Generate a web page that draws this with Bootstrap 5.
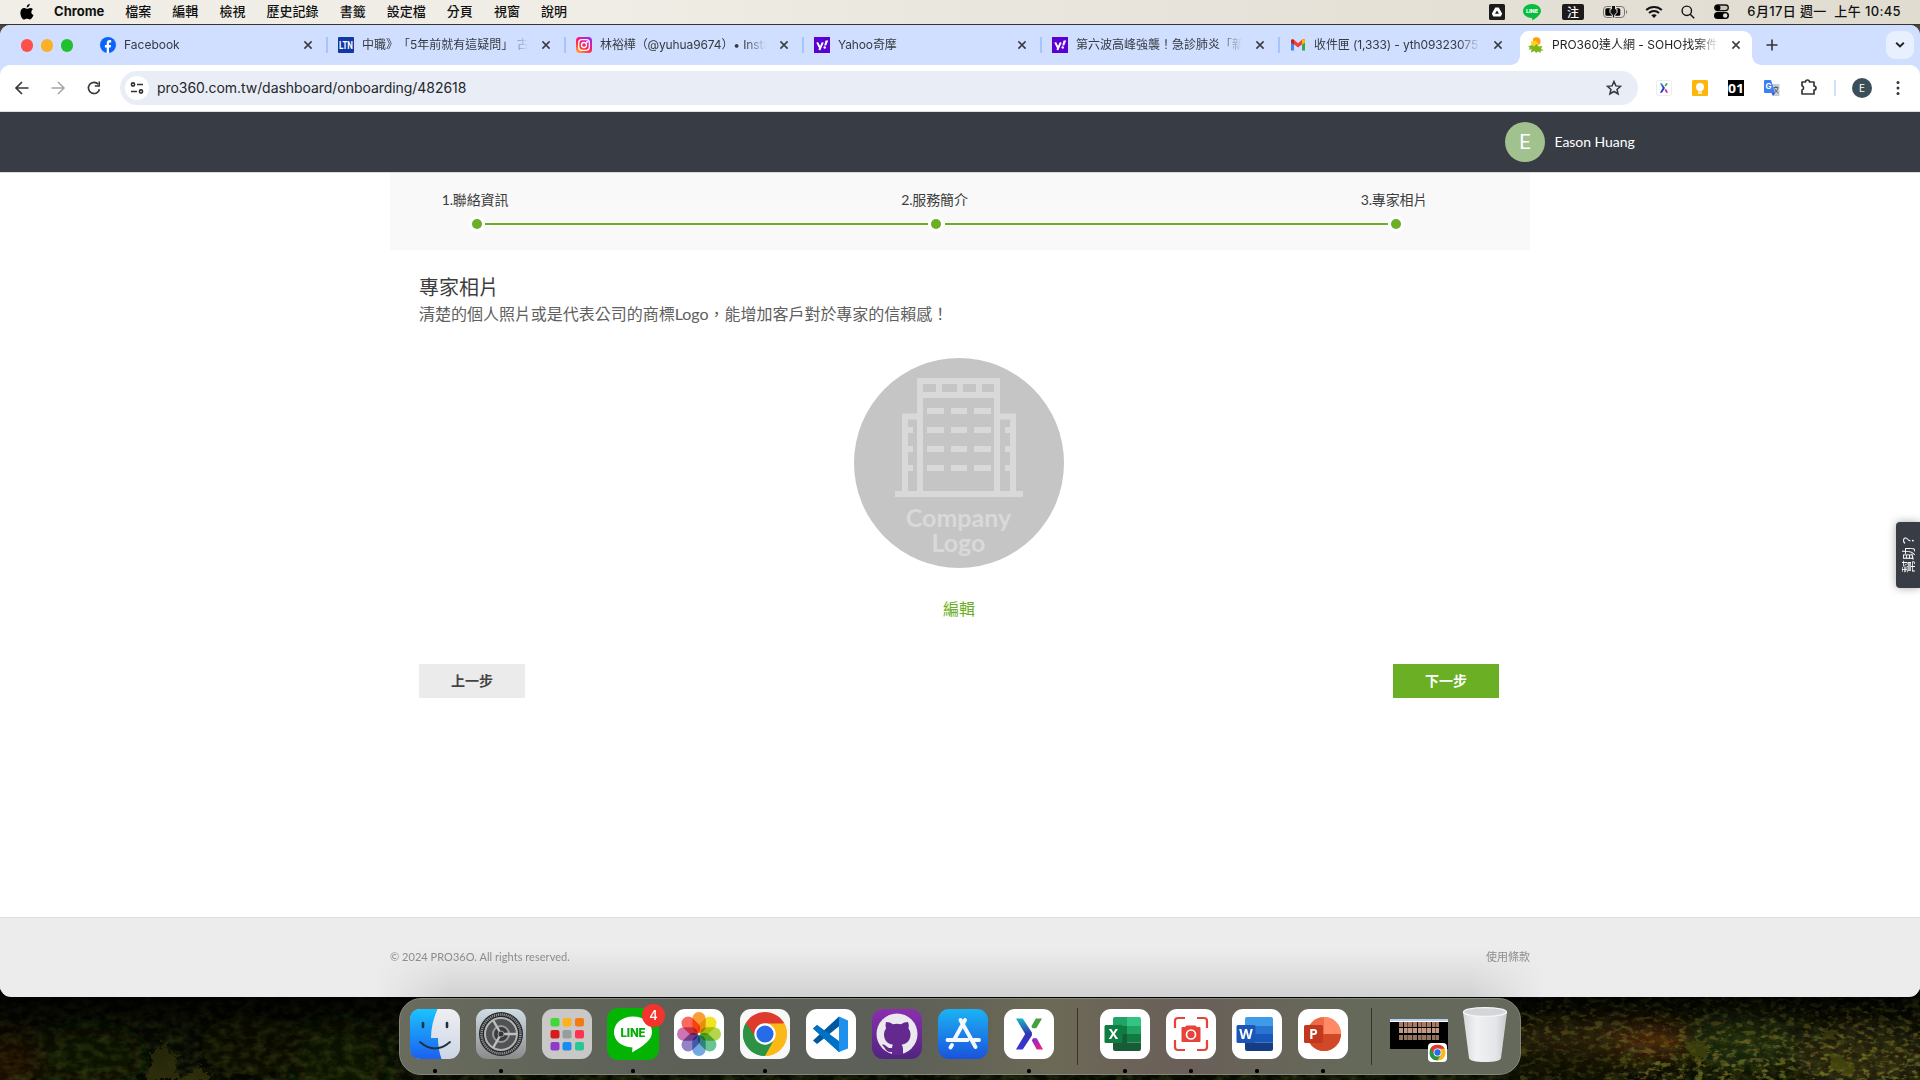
<!DOCTYPE html>
<html lang="zh-Hant">
<head>
<meta charset="utf-8">
<meta name="viewport" content="width=device-width, initial-scale=1">
<title>PRO360達人網 - SOHO找案件</title>
<link href="https://cdn.jsdelivr.net/npm/bootstrap@5.3.0/dist/css/bootstrap.min.css" rel="stylesheet">
<style>
body{width:1920px;height:1080px;overflow:hidden;background:#0a0c04;font-family:Inter,"Noto Sans CJK TC",sans-serif;position:relative;text-spacing-trim:space-all}
svg{display:block;flex:none}
.wallpaper{left:0;top:990px}
.menubar{height:24px;background:linear-gradient(90deg,#f0eee6 0,#efede5 30%,#e7e3da 62%,#e1dcd0 100%);font-size:13px;line-height:22px;color:#111;padding:0 19px 1px 20px;font-weight:500;white-space:nowrap}
.menu-names{gap:21.1px}
.menu-names span,.menu-names b,.clock{padding-bottom:2px}
.menu-names b{width:50px;margin:0 0 0 -1px;font-weight:700;letter-spacing:-.02px}
.clock{margin-left:18px;letter-spacing:.36px}
.window-frame{height:973px;border-top:1px solid #3a352c;background:linear-gradient(#4a463e 0 50%,#000 50%)}
.window-body{height:972px;border-radius:10px 10px 11px 11px;overflow:hidden;background:#fff}
.tabstrip{height:40px;background:#d0dfff;font-size:12px;color:#363a40;position:relative}
.lights{width:88px;padding-left:20.500px;gap:7.5px;padding-top:1px;height:40px}
.light{width:12.5px;height:12.5px;border-radius:50%}
.tab{width:238px;height:40px;padding:0 0 0 12px;position:relative}
.tab .tab-label{flex:none;margin-left:8px;width:168px;white-space:nowrap;overflow:hidden;line-height:20px;-webkit-mask-image:linear-gradient(90deg,#000 86%,transparent 99%);mask-image:linear-gradient(90deg,#000 86%,transparent 99%)}
.tab .closer{margin-left:11px}
.tab .tight{letter-spacing:-.12px}
.tab.split::after{content:"";position:absolute;left:238px;top:12px;width:2px;height:16px;background:#a6c6fb}
.tab.current{width:232px;margin-left:4px;height:34px;margin-top:6px;padding-left:8px;padding-bottom:6px;background:#fff;border-radius:9px 9px 0 0;color:#1d1f22}
.tab.current::before,.tab.current::after{content:"";position:absolute;bottom:0;width:9px;height:9px}
.tab.current::before{left:-9px;background:radial-gradient(circle at 0 0,transparent 8.5px,#fff 9px)}
.tab.current::after{right:-9px;background:radial-gradient(circle at 100% 0,transparent 8.5px,#fff 9px)}
.tab-search{width:28px;height:28px;border-radius:9px;background:#e8effe;margin-left:108px;margin-top:6px}
.toolbar-corners{background:#d0dfff}
.toolbar{height:47px;background:#fff;border-bottom:1px solid #dcdee1;padding:0 0 1px 14px;border-radius:10px 10px 0 0}
.omnibox{width:1518px;height:34px;border-radius:17px;background:#e9edf6;margin-left:18px;padding:0 16px 0 5px;font-size:14px;color:#24272b}
.site-info{width:24px;height:24px;border-radius:50%;background:#fff}
.url{margin-left:8px;letter-spacing:-.05px}
.ext{gap:20px;margin-left:18px}
.ext-line{width:2px;height:16px;background:#cfe0fc;margin-left:17px}
.profile{width:20px;height:20px;background:#3c4f58;margin-left:16px;font-size:10px;line-height:20px}
.page{font-family:Lato,"Noto Sans CJK TC",sans-serif;color:#3d3d3d;font-weight:400}
.site-nav{height:61px;background:#383c45;border-bottom:1px solid #d9dcdb;padding-left:1505px;font-size:14px;color:#fff}
.avatar{width:40px;height:40px;border-radius:50%;background:#a1c18f;font-size:20px;font-family:Roboto,sans-serif}
.user-label{margin-left:9.500px;padding-bottom:2px;letter-spacing:-.06px}
.content-col{width:1140px;margin:0 auto}
.steps{height:77px;background:#f9f9f9;font-size:14px;padding:17px 0 0 16px}
.step{width:138px;text-align:center;line-height:20px;letter-spacing:-.15px}
.step-gap{width:321.5px}
.track{height:10px;margin-top:9px;margin-left:66px}
.dot{width:10px;height:10px;border-radius:50%;background:#6aaf24;box-shadow:0 0 0 3px #fff}
.rail{width:443px;height:2px;margin:0 3px;background:#6aaf24;outline:1px solid #fff}
.inner{height:667px;padding:0 31px 0 29px}
.headline{font-size:20px;line-height:28px;margin:23px 0 0}
.intro{font-size:16px;line-height:24px;margin:1px 0 0;color:#606060;letter-spacing:-.02px}
.logo-box{padding-top:32px}
.edit{color:#6aaf24;font-size:16px;line-height:24px;text-decoration:none;margin-top:29px}
.step-actions{margin-top:43px}
.step-btn{width:106px;height:34px;border-radius:0;border:0;padding:0;font-size:14px;font-weight:700;line-height:34px;background:#ebebeb;color:#444}
.step-btn.next{background:#6aaf24;color:#fff}
.site-footer{height:80px;background:linear-gradient(90deg,transparent 375px,rgba(0,0,0,.11) 450px,rgba(0,0,0,.11) 1470px,transparent 1545px),#ececec;border-top:1px solid #dedede;font-size:11px;color:#8c8c8c;position:relative}
.site-footer::before{content:"";position:absolute;inset:0;background:linear-gradient(#ececec 38%,rgba(236,236,236,0))}
.site-footer .content-col{position:relative}
.rights{letter-spacing:.04px}
.help{right:0;top:522px;width:24px;height:66px;background:#383c45;border-radius:0 4px 4px 0;box-shadow:0 0 8px rgba(0,0,0,.35);color:#fff;font:13px/24px Lato,"Noto Sans CJK TC",sans-serif;writing-mode:vertical-rl;text-orientation:sideways;transform:rotate(180deg);padding-top:15px;white-space:nowrap}
.dock{left:399px;top:998px;width:1122px;height:77px;border-radius:22px;border:1px solid #84877c;background:linear-gradient(90deg,#686b5d 0,#5c6057 25%,#5d6058 45%,#6c6956 58%,#6a5f59 70%,#656959 84%,#65695c 100%);padding-left:10px}
.app{flex:none;width:50px;margin-right:16px;padding-top:10px;position:relative}
.app.on::after{content:"";position:absolute;left:23px;top:70px;width:4px;height:4px;border-radius:1.5px;background:#000}
.dock-line{flex:none;width:1px;height:57px;margin:9px 22px 0 7px;background:#33352a}
.dock-line.last{margin-right:18px}
.alert-count{left:34px;top:5px;width:23px;height:23px;border-radius:50%;background:#f4342c;color:#fff;font:500 13px/23px Inter,sans-serif;text-align:center}
</style>
<script src="https://cdn.jsdelivr.net/npm/bootstrap@5.3.0/dist/js/bootstrap.bundle.min.js"></script>
</head>
<body>
<svg width="0" height="0" class="position-absolute">
<defs>
<linearGradient id="gFinder" x2="0" y2="1"><stop stop-color="#1ac3fd"/><stop offset="1" stop-color="#1c60f0"/></linearGradient>
<linearGradient id="gFace" x2="0" y2="1"><stop stop-color="#efeff1"/><stop offset="1" stop-color="#ccd6e6"/></linearGradient>
<linearGradient id="gSet" x2="0" y2="1"><stop stop-color="#cfdde6"/><stop offset="1" stop-color="#8b8b8b"/></linearGradient>
<linearGradient id="gGit" x2="0" y2="1"><stop stop-color="#8a2fb0"/><stop offset="1" stop-color="#51247f"/></linearGradient>
<linearGradient id="gStore" x2="0" y2="1"><stop stop-color="#1bb3f4"/><stop offset="1" stop-color="#1a53dc"/></linearGradient>
<linearGradient id="gX" x2="0" y2="1"><stop stop-color="#18b5c4"/><stop offset=".5" stop-color="#3434b0"/><stop offset="1" stop-color="#3c33da"/></linearGradient>
<linearGradient id="gX2" x2="1" y2="1"><stop stop-color="#7a2be0"/><stop offset="1" stop-color="#ff1e70"/></linearGradient>
<linearGradient id="gTrash"><stop stop-color="#d5d6d9"/><stop offset=".3" stop-color="#f1f2f4"/><stop offset=".75" stop-color="#e4e5e8"/><stop offset="1" stop-color="#c6c8cc"/></linearGradient>
<linearGradient id="gIg" x1="0" y1="1" x2=".7" y2="0"><stop stop-color="#ffc53a"/><stop offset=".4" stop-color="#ff3a3a"/><stop offset=".7" stop-color="#f0158f"/><stop offset="1" stop-color="#9a2cf0"/></linearGradient>
<symbol id="x" viewBox="0 0 10 10"><path d="M1.400 1.400l7.200 7.200M8.600 1.400L1.400 8.600" stroke="#3b3e43" stroke-width="1.600" fill="none"/></symbol>
<symbol id="yahoo" viewBox="0 0 16 16"><path fill="#5a00d2" d="M0 0h16v16H0z"/><path fill="none" stroke="#fff" stroke-width="2" d="M3.200 5.400l2.500 5M8.800 5.400L5.300 13"/><path fill="#fff" d="M11.600 3.600h2.600l-2 5h-2z"/><circle cx="10.700" cy="10.500" r="1.200" fill="#fff"/></symbol>
<symbol id="chrome" viewBox="0 0 44 44"><path fill="#de3a2e" d="M22 22L2.950 11a22 22 0 0 1 38.100 0z"/><path fill="#fcb916" d="M22 22l19.050-11A22 22 0 0 1 22 44z"/><path fill="#2c9345" d="M22 22v22A22 22 0 0 1 2.950 11z"/><path fill="#de3a2e" d="M22 11.500h19.300L36 5H8l-5 6 10.500 16z"/><path fill="#fcb916" d="M22 11.500h19.300A22 22 0 0 1 22 44l9.500-16z"/><path fill="#2c9345" d="M31.300 27.200L22 44A22 22 0 0 1 2.950 11l9.800 16.200z"/><circle cx="22" cy="22" r="10.700" fill="#fff"/><circle cx="22" cy="22" r="8.600" fill="#266bea"/></symbol>
<symbol id="xmark" viewBox="0 0 30 34"><path fill="url(#gX)" d="M1 1h7l9.500 14.500v3L8 33H1l9.500-16z"/><path fill="#47a03c" d="M21.500 1H28l-6 10h-4l-1-2z"/><path fill="url(#gX2)" d="M18.500 21.500h4L29 33h-6.500l-5-9z"/></symbol>
</defs>
</svg>

<svg class="wallpaper position-absolute" width="1920" height="90" viewBox="0 0 1920 90">
<defs>
<filter id="leaf" x="0" y="0" width="100%" height="100%"><feTurbulence type="fractalNoise" baseFrequency=".09 .13" numOctaves="5" seed="8"/><feColorMatrix values="0 0 0 0 .13  0 0 0 0 .17  0 0 0 0 .02  1.500 0 0 0 -.55"/></filter>
<filter id="glint" x="0" y="0" width="100%" height="100%"><feTurbulence type="fractalNoise" baseFrequency=".12 .22" numOctaves="4" seed="21"/><feColorMatrix values=".9 0 0 0 -.02  0 .7 0 0 .02  0 0 0 0 .04  0 0 5 0 -2.500"/></filter>
<filter id="blurry" x="-30%" y="-50%" width="160%" height="200%"><feGaussianBlur stdDeviation="13"/></filter>
<filter id="rough" x="-20%" y="-20%" width="140%" height="140%"><feTurbulence type="fractalNoise" baseFrequency=".25" numOctaves="3" seed="3"/><feDisplacementMap in="SourceGraphic" scale="13" xChannelSelector="R" yChannelSelector="G"/></filter>
<linearGradient id="shade" x2="0" y2="1"><stop stop-color="#000" stop-opacity=".95"/><stop offset=".5" stop-color="#000" stop-opacity=".25"/><stop offset="1" stop-color="#000" stop-opacity="0"/></linearGradient>
</defs>
<path fill="#080b03" d="M0 0h1920v90H0z"/>
<g filter="url(#blurry)"><circle cx="10" cy="70" r="28" fill="#231005"/><ellipse cx="90" cy="65" rx="55" ry="28" fill="#0d1503"/><ellipse cx="250" cy="55" rx="50" ry="30" fill="#071004"/><ellipse cx="340" cy="70" rx="45" ry="40" fill="#0e1703"/><ellipse cx="1600" cy="50" rx="90" ry="18" fill="#4a310a"/><ellipse cx="1655" cy="48" rx="40" ry="14" fill="#6b300a"/><ellipse cx="1740" cy="48" rx="60" ry="28" fill="#20330a"/><ellipse cx="1860" cy="65" rx="70" ry="32" fill="#2c2808"/></g>
<path filter="url(#leaf)" d="M0 0h1920v90H0z" opacity=".5"/>
<svg x="1520" width="400" height="90"><path filter="url(#glint)" d="M0 0h400v90H0z" opacity=".48"/></svg>
<g filter="url(#rough)"><path fill="#34330b" d="M164 50l6 13 10 4-7 7 9 16h-37l9-20-6-4 10-6zM200 76l13 14h-35z" opacity=".85"/><path fill="#4f5110" opacity=".75" d="M1684 54l10-6 16 9-4 12-18-3zM1822 42l6-4 9 3-2 10-11-2zM1828 64l14 2 14 13-6 8-18-8z"/><path fill="#65320b" opacity=".45" d="M1644 47l16-3 21 8-5 6-30-4z"/></g>
<ellipse cx="1565" cy="78" rx="60" ry="28" fill="#080b03" opacity=".65" filter="url(#blurry)"/>
<path fill="url(#shade)" d="M0 0h1920v90H0z"/>
</svg>

<header class="menubar d-flex justify-content-between align-items-center">
<div class="menu-names d-flex align-items-center">
<svg width="14" height="18" viewBox="0 0 14 18"><path d="M9.800.8C9.900 2.700 8.400 4.500 6.700 4.400 6.600 2.700 8.100 1 9.800.8zM12.900 6.300C10.600 7.800 10.900 11 13.500 12.100c-.9 2.400-2.200 4.400-3.600 4.400-1.200 0-1.500-.7-2.800-.7s-1.700.7-2.800.7C2.200 16.500.4 13 .4 9.700.4 6.700 2.200 5 4.100 5c1.200 0 2.100.8 3 .8.900 0 1.900-.9 3.300-.9 1.100 0 2 .6 2.500 1.400z"/></svg>
<b>Chrome</b><span>檔案</span><span>編輯</span><span>檢視</span><span>歷史記錄</span><span>書籤</span><span>設定檔</span><span>分頁</span><span>視窗</span><span>說明</span>
</div>
<div class="d-flex align-items-center">
<svg width="16" height="16" viewBox="0 0 16 16"><rect width="16" height="16" rx="1.500" fill="#1c1b19"/><path d="M6.300 3.500h3.400l3.500 6.300-1.500 2.700H4.300L2.800 9.800z" fill="#fff"/><path d="M8 6.500l2 3.300H6z" fill="#1c1b19"/></svg>
<svg style="margin-left:17px" width="20" height="18" viewBox="0 0 20 18"><path fill="#06bd3d" d="M10 1c5 0 9 3 9 7 0 4-5 7-8.500 9.500L10 15C5 15 1 12 1 8s4-7 9-7z"/><text x="10" y="10.200" font-size="5.400" font-weight="800" fill="#fff" text-anchor="middle">LINE</text></svg>
<svg style="margin-left:20px" width="22" height="16" viewBox="0 0 22 16"><rect width="22" height="16" rx="2" fill="#1c1b19"/><text x="11" y="12.500" font-size="12" fill="#fff" text-anchor="middle" font-family="Noto Sans CJK TC">注</text></svg>
<svg style="margin-left:17px" width="28" height="14" viewBox="0 0 28 14"><rect x="2.500" y="1.500" width="21" height="11" rx="3.300" fill="none" stroke="#77746d"/><rect x="4.300" y="3.300" width="15" height="7.400" rx="1.500"/><path d="M25 5v4c1.500-.5 1.500-3.500 0-4z" fill="#77746d"/><path d="M10.500 1v3H9v3.500l2.300 2.500v3h2.400v-3L16 7.500V4h-1.500V1" stroke="#e6e2d9" stroke-width="1" fill="#111"/></svg>
<svg style="margin-left:16px" width="18" height="14" viewBox="0 0 18 14" fill="none" stroke="#111" stroke-width="2"><path d="M1.200 5C5.500.9 12.500.9 16.800 5"/><path d="M4 8c2.800-2.700 7.200-2.700 10 0"/><path d="M9 13L6.300 10.200c1.500-1.400 3.900-1.400 5.400 0z" fill="#111" stroke="none"/></svg>
<svg style="margin-left:18px" width="14" height="14" viewBox="0 0 14 14" fill="none" stroke="#111" stroke-width="1.400"><circle cx="5.800" cy="5.800" r="4.700"/><path d="M9.200 9.200l4 4"/></svg>
<svg style="margin-left:19px" width="15" height="15" viewBox="0 0 15 15"><rect x=".7" y="1" width="13.600" height="5.600" rx="2.800" fill="#c9c5bb" stroke="#111" stroke-width="1.300"/><circle cx="3.800" cy="3.800" r="2.700"/><rect y="8" width="15" height="7" rx="3.500"/><circle cx="11.200" cy="11.500" r="2.200" fill="#e2ddd2"/></svg>
<span class="clock">6月17日 週一&nbsp; 上午 10:45</span>
</div>
</header>

<main class="window-frame"><div class="window-body">
<div class="tabstrip d-flex">
<div class="lights d-flex align-items-center"><span class="light" style="background:#fe5048"></span><span class="light" style="background:#fdb026"></span><span class="light" style="background:#1fc12f"></span></div>
<div class="tab split d-flex align-items-center"><svg width="16" height="16" viewBox="0 0 16 16"><circle cx="8" cy="8" r="8" fill="#0b63fb"/><path fill="#fff" d="M6.700 16v-5.500H4.900V8.100h1.800V6.500c0-2.300 1.100-3.400 3.100-3.400.6 0 1.100.1 1.400.2v2.200h-1c-.9 0-1.200.4-1.200 1.300v1.300h2.100l-.4 2.400H9V16z"/></svg><span class="tab-label">Facebook</span><svg class="closer" width="10" height="10"><use href="#x"/></svg></div>
<div class="tab split d-flex align-items-center"><svg width="16" height="16" viewBox="0 0 16 16"><rect width="16" height="16" rx="1" fill="#1238a6"/><text x="1" y="12" font-family="Roboto" font-size="10" font-weight="700" textLength="14" lengthAdjust="spacingAndGlyphs" fill="#fff">LTN</text></svg><span class="tab-label">中職》「5年前就有這疑問」 古</span><svg class="closer" width="10" height="10"><use href="#x"/></svg></div>
<div class="tab split d-flex align-items-center"><svg width="16" height="16" viewBox="0 0 16 16" fill="none" stroke="#fff" stroke-width="1.300"><rect width="16" height="16" rx="3.500" fill="url(#gIg)" stroke="none"/><rect x="2.700" y="2.700" width="10.600" height="10.600" rx="3"/><circle cx="8" cy="8" r="2.500"/><circle cx="11" cy="5" r=".4"/></svg><span class="tab-label tight">林裕樺（@yuhua9674）• Insta</span><svg class="closer" width="10" height="10"><use href="#x"/></svg></div>
<div class="tab split d-flex align-items-center"><svg width="16" height="16"><use href="#yahoo"/></svg><span class="tab-label tight">Yahoo奇摩</span><svg class="closer" width="10" height="10"><use href="#x"/></svg></div>
<div class="tab split d-flex align-items-center"><svg width="16" height="16"><use href="#yahoo"/></svg><span class="tab-label">第六波高峰強襲！急診肺炎「新</span><svg class="closer" width="10" height="10"><use href="#x"/></svg></div>
<div class="tab d-flex align-items-center"><svg width="16" height="16" viewBox="0 0 16 16"><path fill="#4285f4" d="M1 3v10.500h3V7z"/><path fill="#34a853" d="M15 3v10.500h-3V7z"/><path fill="#ea4335" d="M1 3.500C1 2 3 1.800 4 2.800l4 3.400 4-3.400c1-1 3-.8 3 .7V5l-7 5.500L1 5z"/><path fill="#c5221f" d="M1 4v1.500l3 2.300V2.900C2.900 2 1 2.400 1 4z"/><path fill="#fbbc04" d="M15 4v1.500l-3 2.300V2.900c1.100-.9 3-.5 3 1.100z"/></svg><span class="tab-label tight">收件匣 (1,333) - yth09323075</span><svg class="closer" width="10" height="10"><use href="#x"/></svg></div>
<div class="tab current d-flex align-items-center"><svg width="16" height="16" viewBox="0 0 16 16"><path fill="#ff9b15" d="M5 1.500C7-.5 11-.3 12 2c1.300 2.600.5 5.500-2 6L5 6.500z"/><path fill="#ffcf1c" d="M3 4.500l5-1L11.500 8 7 10 3.500 8z"/><path fill="#7eb51e" d="M0 9.500l4-1.500 2 1.500L8.500 7l2 2.500 4-.5-1.500 2.500 2.500 2-3 .3.500 2.200-3-1.500-2 1.500-1.500-2L3 15.500 3.500 12 .5 13 2 10.700z"/></svg><span class="tab-label">PRO360達人網 - SOHO找案件</span><svg class="closer" width="10" height="10"><use href="#x"/></svg></div>
<svg style="margin:14px 0 0 14px" width="12" height="12" viewBox="0 0 12 12"><path d="M6 .5v11M.5 6h11" stroke="#333" stroke-width="1.600"/></svg>
<div class="tab-search d-flex align-items-center justify-content-center"><svg width="10" height="8" viewBox="0 0 10 8"><path d="M1.200 1.800L5 5.500l3.800-3.700" fill="none" stroke="#222" stroke-width="1.900"/></svg></div>
</div>
<div class="toolbar-corners"><div class="toolbar d-flex align-items-center">
<svg width="16" height="16" viewBox="0 0 16 16" fill="none" stroke="#34373b" stroke-width="1.700"><path d="M14.500 8H2.500M8 2L2 8l6 6"/></svg>
<svg style="margin-left:20px" width="16" height="16" viewBox="0 0 16 16" fill="none" stroke="#a3a6aa" stroke-width="1.500"><path d="M1.500 8h12M8 2l6 6-6 6"/></svg>
<svg style="margin-left:20px" width="16" height="16" viewBox="0 0 16 16"><path d="M13.500 9.200A5.600 5.600 0 1 1 12.300 4.300" fill="none" stroke="#34373b" stroke-width="1.600"/><path d="M14 1.500v5.300H8.800V5.300h3.700V1.500z" fill="#34373b"/></svg>
<div class="omnibox d-flex align-items-center"><span class="site-info d-flex align-items-center justify-content-center"><svg width="14" height="12" viewBox="0 0 14 12" fill="none" stroke="#333" stroke-width="1.600"><circle cx="3" cy="2.500" r="1.600"/><path d="M7 2.500h6M1 9.500h6"/><circle cx="11" cy="9.500" r="1.600"/></svg></span><span class="url flex-grow-1">pro360.com.tw/dashboard/onboarding/482618</span>
<svg width="16" height="16" viewBox="0 0 16 16"><path d="M8 1.500l1.900 4.400 4.700.4-3.600 3.100 1.100 4.600L8 11.500 3.900 14 5 9.400 1.400 6.300l4.700-.4z" fill="none" stroke="#34373b" stroke-width="1.500"/></svg></div>
<div class="ext d-flex align-items-center">
<svg width="16" height="16" viewBox="0 0 16 16"><rect x=".5" y=".5" width="15" height="15" rx="2" fill="#fff" stroke="#ededed"/><use href="#xmark" x="3.500" y="3" width="9" height="10"/></svg>
<svg width="16" height="16" viewBox="0 0 16 16"><rect width="16" height="16" rx="1.500" fill="#fcb60c"/><circle cx="8" cy="7" r="4" fill="#fff"/><path fill="#fff" d="M6 9.500h4v2H6zM6 12.300h4v1.400H6z"/></svg>
<svg width="16" height="16" viewBox="0 0 16 16"><path d="M0 0h16v16H0z"/><text x="0" y="12.500" fill="#fff" font-family="Noto Sans" font-weight="700" font-size="13" textLength="16" lengthAdjust="spacingAndGlyphs">01</text></svg>
<svg width="16" height="16" viewBox="0 0 16 16"><path fill="#c9cdd3" d="M6 4h9.500v12H9z"/><path fill="#3c80f2" d="M0 1q0-1 1-1h6l4 13H1q-1 0-1-1z"/><path fill="#2a56c6" d="M7.500 13H11l-2 3z"/><text x="1.500" y="9" font-size="8" font-weight="700" fill="#fff">G</text><path d="M9.500 7.500h5M12 6v1.500M14 8q-1 3-3.500 5M10.500 8.500q1 3 4 4.500" stroke="#50637c" fill="none"/></svg>
<svg width="17" height="17" viewBox="0 0 17 17"><path d="M2 3h3.500a2 2 0 0 1 4 0H14v4a2 2 0 0 1 0 4v4H2v-4a2.200 2.200 0 0 0 0-4.200z" fill="none" stroke="#34373b" stroke-width="1.700" stroke-linejoin="round"/></svg>
</div>
<span class="ext-line"></span>
<span class="profile rounded-circle text-white text-center">E</span>
<svg style="margin-left:24px" width="4" height="16" viewBox="0 0 4 16" fill="#34373b"><circle cx="2" cy="2.500" r="1.500"/><circle cx="2" cy="8" r="1.500"/><circle cx="2" cy="13.500" r="1.500"/></svg>
</div></div>

<div class="page">
<nav class="site-nav d-flex align-items-center"><span class="avatar d-flex align-items-center justify-content-center">E</span><span class="user-label">Eason Huang</span></nav>
<div class="content-col">
<div class="steps">
<div class="d-flex"><span class="step">1.聯絡資訊</span><span class="step-gap"></span><span class="step">2.服務簡介</span><span class="step-gap"></span><span class="step">3.專家相片</span></div>
<div class="track d-flex align-items-center"><span class="dot"></span><span class="rail"></span><span class="dot"></span><span class="rail ms-1"></span><span class="dot"></span></div>
</div>
<section class="inner d-flex flex-column">
<h1 class="headline fw-normal">專家相片</h1>
<p class="intro">清楚的個人照片或是代表公司的商標Logo，能增加客戶對於專家的信賴感！</p>
<div class="logo-box text-center d-flex flex-column align-items-center">
<svg width="210" height="210" viewBox="0 0 210 210"><circle cx="105" cy="105" r="105" fill="#c5c5c5"/><g fill="none" stroke="#d9d9d9" stroke-width="6"><path d="M41 136h128M66 136V23h77v113M66 37h77M51 136V58.500h15M143 58.500h16V136"/><path d="M85 20v16M106 20v16M125 20v16"/><path d="M73 53h17M97 53h16M120 53h17M73 72h17M97 72h16M120 72h17M73 91h17M97 91h16M120 91h17M73 110h17M97 110h16M120 110h17M54 72h5M54 91h5M54 110h5M151 72h5M151 91h5M151 110h5"/></g><text fill="#d9d9d9" font-family="Lato" font-weight="700" font-size="25" text-anchor="middle"><tspan x="104.500" y="169">Company</tspan><tspan x="104.500" y="194">Logo</tspan></text></svg>
<a class="edit" href="#">編輯</a>
</div>
<div class="step-actions d-flex justify-content-between"><button class="btn step-btn">上一步</button><button class="btn step-btn next">下一步</button></div>
</section>
</div>
<footer class="site-footer"><div class="content-col d-flex justify-content-between align-items-center h-100"><span class="rights">© 2024 PRO36O. All rights reserved.</span><span>使用條款</span></div></footer>
</div>
</div></main>

<aside class="help position-absolute">幫助？</aside>

<div class="dock position-absolute d-flex">
<div class="app on"><svg width="50" height="50" viewBox="0 0 50 50"><rect width="50" height="50" rx="11" fill="url(#gFace)"/><path fill="url(#gFinder)" d="M11 0h16.500Q21 15 21 29h7q0 11 3.500 21H11Q0 50 0 39V11Q0 0 11 0z"/><path d="M13 14v4M37 14v4" stroke="#203040" stroke-width="2.600" stroke-linecap="round"/><path d="M10 33q15 13 30 0" fill="none" stroke="#203040" stroke-width="1.900" stroke-linecap="round"/></svg></div>
<div class="app on"><svg width="50" height="50" viewBox="0 0 50 50"><rect width="50" height="50" rx="11" fill="url(#gSet)"/><circle cx="25" cy="25" r="22" fill="#272829"/><circle cx="25" cy="25" r="19.500" fill="none" stroke="#929496" stroke-width="2.500" stroke-dasharray="1.200 .8"/><circle cx="25" cy="25" r="16" fill="#505254" stroke="#b2b4b5" stroke-width="2"/><circle cx="25" cy="25" r="8" fill="#3a3b3c" stroke="#999" stroke-width="2"/><path d="M25 25h16M25 25l-8-14M25 25l-8 14" stroke="#bfc0c0" stroke-width="2.400"/><circle cx="25" cy="25" r="3" fill="#353535" stroke="#999"/></svg></div>
<div class="app"><svg width="50" height="50" viewBox="0 0 50 50"><rect width="50" height="50" rx="11" fill="#c9c8c7"/><rect x="8.500" y="9" width="9" height="8.500" rx="2" fill="#41d736"/><rect x="20.500" y="9" width="9" height="8.500" rx="2" fill="#fbb21b"/><rect x="33" y="9" width="9" height="8.500" rx="2" fill="#f47b14"/><rect x="8.500" y="21" width="9" height="8.500" rx="2" fill="#d71d19"/><rect x="20.500" y="21" width="9" height="8.500" rx="2" fill="#969d9f"/><rect x="33" y="21" width="9" height="8.500" rx="2" fill="#fd3550"/><rect x="8.500" y="33" width="9" height="8.500" rx="2" fill="#8f3bc9"/><rect x="20.500" y="33" width="9" height="8.500" rx="2" fill="#188cf0"/><rect x="33" y="33" width="9" height="8.500" rx="2" fill="#29c795"/></svg></div>
<div class="app on"><svg width="52" height="52" viewBox="0 0 52 52" style="margin:-1px"><rect width="52" height="52" rx="11" fill="#04b404"/><path fill="#fff" d="M26 8.500c11 0 19 6.500 19 15.500 0 8-8.500 14-20 20.500l.5-5C14 39 7 32.500 7 24S15 8.500 26 8.500z"/><text x="26" y="28.500" text-anchor="middle" font-size="11.500" font-weight="800" fill="#04ac04" textLength="25">LINE</text></svg><span class="alert-count position-absolute">4</span></div>
<div class="app"><svg width="50" height="50" viewBox="0 0 50 50"><rect width="50" height="50" rx="11" fill="#fff"/><g style="isolation:isolate"><g fill-opacity=".9" style="mix-blend-mode:multiply"><rect x="18.300" y="3" width="13.400" height="21" rx="6.700" fill="#fb921d"/></g><g style="mix-blend-mode:multiply"><rect x="18.300" y="3" width="13.400" height="21" rx="6.700" fill="#efe323" transform="rotate(45 25 25)"/></g><g style="mix-blend-mode:multiply"><rect x="18.300" y="3" width="13.400" height="21" rx="6.700" fill="#b4d64a" transform="rotate(90 25 25)"/></g><g style="mix-blend-mode:multiply"><rect x="18.300" y="3" width="13.400" height="21" rx="6.700" fill="#68c492" transform="rotate(135 25 25)"/></g><g style="mix-blend-mode:multiply"><rect x="18.300" y="3" width="13.400" height="21" rx="6.700" fill="#73aade" transform="rotate(180 25 25)"/></g><g style="mix-blend-mode:multiply"><rect x="18.300" y="3" width="13.400" height="21" rx="6.700" fill="#9284c6" transform="rotate(225 25 25)"/></g><g style="mix-blend-mode:multiply"><rect x="18.300" y="3" width="13.400" height="21" rx="6.700" fill="#cc74b5" transform="rotate(270 25 25)"/></g><g style="mix-blend-mode:multiply"><rect x="18.300" y="3" width="13.400" height="21" rx="6.700" fill="#fb6a5c" transform="rotate(315 25 25)"/></g></g></svg></div>
<div class="app on"><svg width="50" height="50" viewBox="0 0 50 50"><rect width="50" height="50" rx="11" fill="#f7f7f7"/><use href="#chrome" x="3" y="3" width="44" height="44"/></svg></div>
<div class="app"><svg width="50" height="50" viewBox="0 0 50 50"><rect width="50" height="50" rx="11" fill="#fff"/><path fill="#0072c6" d="M11 16l-4 3.500L33 43l1-10z"/><path fill="#0058a0" d="M11 35l-4-3.500L33 7.500l1 9z"/><path fill="#0072c6" d="M7 19.500l4-3.500 23 17v10h-1z"/><path fill="#1f90ed" d="M33 7.500l9 4v28l-9 3.500z"/></svg></div>
<div class="app"><svg width="50" height="50" viewBox="0 0 50 50"><rect width="50" height="50" rx="11" fill="url(#gGit)"/><circle cx="25" cy="25" r="20.500" fill="#ebe8f0"/><path fill="#63298f" d="M14 13q4 0 7 2.200 4-1 8 0Q32 13 36 13q1.500 3 .5 6.500Q38.500 22 38.500 25c0 7-4 10-9 10.700Q31 37 31 40v6H20v-3c-5 1-6.500-3-8-5s-2-1.500-1.500-2.500c3-1 4.500 4.500 9.500 3.500q0-2 1-3.300c-5-.7-9-3.700-9-10.700q0-3 2-5.500-1-3.500 0-6.500z"/></svg></div>
<div class="app"><svg width="50" height="50" viewBox="0 0 50 50"><rect width="50" height="50" rx="11" fill="url(#gStore)"/><g stroke="#f5faff" stroke-width="3.900" stroke-linecap="round"><path d="M27 11L16 31M22.500 11L37.500 38M9.500 31h20M36 31h5M14 36l-1.500 2.500"/></g></svg></div>
<div class="app on"><svg width="50" height="50" viewBox="0 0 50 50"><rect width="50" height="50" rx="11" fill="#fff"/><use href="#xmark" x="11" y="8" width="29" height="34"/></svg></div>
<span class="dock-line"></span>
<div class="app on"><svg width="50" height="50" viewBox="0 0 50 50"><rect width="50" height="50" rx="11" fill="#fff"/><path fill="#21a366" d="M13 10q0-2 2-2h12v9H13z"/><path fill="#33c481" d="M27 8h12q2 0 2 2v7H27z"/><path fill="#107c41" d="M13 17h14v8H13zM27 25h14v8.500H27z"/><path fill="#21a366" d="M27 17h14v8H27z"/><path fill="#185c37" d="M13 25h14v8.500h14V40q0 2-2 2H15q-2 0-2-2z"/><rect x="4.500" y="16" width="18" height="18" rx="1.500" fill="#107c41"/><text x="13.500" y="30" text-anchor="middle" font-size="14" font-weight="700" font-family="Open Sans" fill="#fff">X</text></svg></div>
<div class="app on"><svg width="50" height="50" viewBox="0 0 50 50"><rect width="50" height="50" rx="11" fill="#fff"/><path d="M9 19v-7q0-3 3-3h7M31 9h7q3 0 3 3v7M41 31v7q0 3-3 3h-7M19 41h-7q-3 0-3-3v-7" fill="none" stroke="#e8433a" stroke-width="2.200"/><path fill="#e8433a" d="M15.500 19q0-1 1-1H19l1.500-1.500h9L31 18h2.500q1 0 1 1v13q0 1-1 1h-17q-1 0-1-1z"/><circle cx="25" cy="25.500" r="4.500" fill="none" stroke="#fff" stroke-width="1.700"/></svg></div>
<div class="app on"><svg width="50" height="50" viewBox="0 0 50 50"><rect width="50" height="50" rx="11" fill="#fff"/><path fill="#3d9bea" d="M13 10q0-2 2-2h24q2 0 2 2v7H13z"/><path fill="#2874d0" d="M13 17h28v8H13z"/><path fill="#1858bc" d="M13 25h28v8.500H13z"/><path fill="#143d86" d="M13 33.500h28V40q0 2-2 2H15q-2 0-2-2z"/><rect x="4.500" y="16" width="19" height="18" rx="1.500" fill="#1b55b6"/><text x="14" y="30" text-anchor="middle" font-size="14" font-weight="700" font-family="Open Sans" fill="#fff">W</text></svg></div>
<div class="app on"><svg width="50" height="50" viewBox="0 0 50 50"><rect width="50" height="50" rx="11" fill="#fff"/><circle cx="26" cy="25" r="17" fill="#ed6c47"/><path fill="#ff8a65" d="M26 8a17 17 0 0 1 17 17H26z"/><path fill="#d04826" d="M43 25a17 17 0 0 1-34 0z"/><rect x="6" y="16" width="19" height="18" rx="1.500" fill="#c2381c"/><text x="15.500" y="30" text-anchor="middle" font-size="14" font-weight="700" font-family="Open Sans" fill="#fff">P</text></svg></div>
<span class="dock-line last"></span>
<svg width="58" height="45" viewBox="0 0 58 45" style="margin-top:20px"><path d="M0 0h58v30H0z"/><path fill="#b8cdf1" d="M0 0h58v2H0z"/><path fill="#fff" d="M0 2h58v1H0z"/><g stroke-width="5" stroke-dasharray="4 1 3 .4 5 .6"><path d="M9 5.500h40" stroke="#a77963"/><path d="M9 11.500h40" stroke="#c09a85"/><path d="M9 18.500h40" stroke="#93755f"/></g><rect x="38" y="24" width="19" height="19" rx="4" fill="#fff"/><use href="#chrome" x="39.500" y="25.500" width="16" height="16"/></svg>
<svg style="margin:8px 0 0 15px" width="44" height="56" viewBox="0 0 44 56"><path fill="url(#gTrash)" d="M0 5l6 46q1 4 16 4t16-4l6-46z"/><ellipse cx="22" cy="5" rx="21.500" ry="4.300" fill="#d4d5d8" stroke="#f5f5f6" stroke-width="1.300"/></svg>
</div>
</body>
</html>
